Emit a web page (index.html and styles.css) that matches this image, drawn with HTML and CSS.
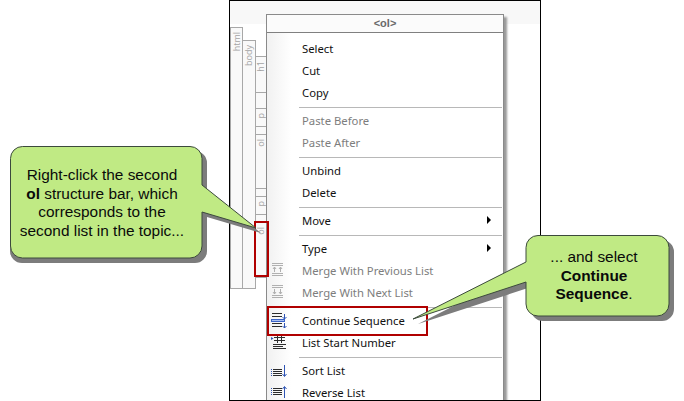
FILE: index.html
```html
<!DOCTYPE html>
<html lang="en">
<head>
<meta charset="utf-8">
<title>Continue Sequence</title>
<link rel="stylesheet" href="styles.css">
</head>
<body>
<div class="canvas">
  <div class="frame">
    <div class="strip"></div>
    <div class="bar bar-html"><span class="bar-label">html</span></div>
    <div class="bar bar-body"><span class="bar-label">body</span></div>
    <div class="bar cell1"><span class="bar-label">h1</span></div>
    <div class="bar cell2"></div>
    <div class="bar cell3"><span class="bar-label">p</span></div>
    <div class="bar cell4"></div>
    <div class="bar cell5"><span class="bar-label">ol</span></div>
    <div class="bar cell6"></div>
    <div class="bar cell7"><span class="bar-label">p</span></div>
    <div class="bar cell8"></div>
    <div class="bar cell9"><span class="bar-label">ol</span></div>
    <div class="menu">
      <div class="menu-title">&lt;ol&gt;</div>
      <div class="menu-body">
        <div class="item">Select</div>
        <div class="item">Cut</div>
        <div class="item">Copy</div>
        <div class="sep"></div>
        <div class="item off">Paste Before</div>
        <div class="item off">Paste After</div>
        <div class="sep"></div>
        <div class="item">Unbind</div>
        <div class="item">Delete</div>
        <div class="sep"></div>
        <div class="item sub">Move</div>
        <div class="sep"></div>
        <div class="item sub">Type</div>
        <div class="item off">
          <svg class="ico" width="16" height="16" viewBox="0 0 16 16"><path d="M1 1.500h11M1 3.500h11M1 11.500h11M1 13.500h11M3.500 5v5M9.500 5v5M2 7l1.500-2 1.500 2M8 7l1.500-2 1.500 2" stroke="#b0b0b0" fill="none"/></svg>
          Merge With Previous List</div>
        <div class="item off">
          <svg class="ico" width="16" height="16" viewBox="0 0 16 16"><path d="M1 1.500h11M1 3.500h11M1 11.500h11M1 13.500h11M3.500 5v5M9.500 5v5M2 8l1.500 2 1.500-2M8 8l1.500 2 1.500-2" stroke="#b0b0b0" fill="none"/></svg>
          Merge With Next List</div>
        <div class="sep"></div>
        <div class="item">
          <svg class="ico" width="16" height="16" viewBox="0 0 16 16"><path d="M1 1.500h10M1 4.500h10M1 11.500h10M1 14.500h10" stroke="#2b2b2b" fill="none"/><rect x="0.500" y="7.500" width="13" height="2" fill="#a9c0f0" stroke="#3c64c8"/><path d="M13.500 2v5M13.500 11v5M11.500 5l2 2 2-2M11.500 14l2 2 2-2" stroke="#2f55b5" fill="none"/></svg>
          Continue Sequence</div>
        <div class="item">
          <svg class="ico" width="16" height="16" viewBox="0 0 16 16"><path d="M0 3l2.500 1.500-2.500 1.500z" fill="#2f55b5"/><path d="M3 3.500h11M3 6.500h11M6.500 1v8M10.500 1v8M2 10.500h13M2 12.500h10M2 14.500h13" stroke="#2e2e2e" fill="none"/></svg>
          List Start Number</div>
        <div class="sep"></div>
        <div class="item">
          <svg class="ico" width="16" height="16" viewBox="0 0 16 16"><path d="M2 7.500h9M2 9.500h9M2 11.500h9M2 13.500h9" stroke="#2b2b2b" fill="none"/><path d="M0 7.500h1M0 9.500h1M0 11.500h1M0 13.500h1M13.500 3v11M11.500 12l2 2.500 2-2.500" stroke="#2f55b5" fill="none"/></svg>
          Sort List</div>
        <div class="item">
          <svg class="ico" width="16" height="16" viewBox="0 0 16 16"><path d="M2 4.500h9M2 6.500h9M2 8.500h9M2 10.500h9" stroke="#2b2b2b" fill="none"/><path d="M0 4.500h1M0 6.500h1M0 8.500h1M0 10.500h1M13.500 3v11M11.500 5l2-2.500 2 2.500" stroke="#2f55b5" fill="none"/></svg>
          Reverse List</div>
      </div>
    </div>
    <div class="mark mark-bar"></div>
    <div class="mark mark-item"></div>
  </div>
  <svg class="callouts" width="684" height="401" viewBox="0 0 684 401">
    <path class="shadow" d="M22 151H195a12 12 0 0 1 12 12V190L261 233 207 217V251a12 12 0 0 1-12 12H22a12 12 0 0 1-12-12V163a12 12 0 0 1 12-12z"/>
    <path class="shape" d="M22.500 146.500H190a12 12 0 0 1 12 12V185L256 228 202 212V246a12 12 0 0 1-12 12H22.500a12 12 0 0 1-12-12V158.500a12 12 0 0 1 12-12z"/>
    <path class="shadow" d="M543 240H662a12 12 0 0 1 12 12V309a12 12 0 0 1-12 12H543a12 12 0 0 1-12-12V287L418 324 531 267V252a12 12 0 0 1 12-12z"/>
    <path class="shape" d="M538 235.500H657a12 12 0 0 1 12 12V304a12 12 0 0 1-12 12H538a12 12 0 0 1-12-12V282L413 319 526 262V247.500a12 12 0 0 1 12-12z"/>
  </svg>
  <div class="note note-left">Right-click the second<br><b>ol</b> structure bar, which<br>corresponds to the<br>second list in the topic...</div>
  <div class="note note-right">... and select<br><b>Continue<br>Sequence</b>.</div>
</div>
</body>
</html>
```
FILE: styles.css
```css
html, body { margin: 0; padding: 0; background: #fff; }
.canvas { position: relative; width: 684px; height: 401px; overflow: hidden; }
.frame { position: absolute; left: 229px; top: 0; width: 310px; height: 399px; border: 1px solid #000; overflow: hidden; background: #fff; }
.strip { position: absolute; left: 0; top: 0; width: 310px; height: 23px; background: #f8f8f8; }
.bar { position: absolute; background: #f9f9f9; border: 1px solid #a8a8a8; box-sizing: border-box; }
.bar-label { position: absolute; top: 4px; left: 50%; font: 9px/12px "Open Sans", sans-serif; color: #a4a4a4; transform-origin: left top; transform: rotate(-90deg) translate(-100%, -50%); white-space: nowrap; }
.bar-html { left: 0; top: 26px; width: 13px; height: 262px; }
.bar-body { left: 12px; top: 39px; width: 14px; height: 249px; }
.cell1, .cell2, .cell3, .cell4, .cell5, .cell6, .cell7, .cell8, .cell9 { left: 25px; width: 12px; }
.cell1 { top: 55px; height: 37px; }
.cell2 { top: 91px; height: 17px; }
.cell3 { top: 107px; height: 19px; }
.cell4 { top: 125px; height: 9px; }
.cell5 { top: 133px; height: 55px; }
.cell6 { top: 187px; height: 9px; }
.cell7 { top: 195px; height: 19px; }
.cell8 { top: 213px; height: 9px; }
.cell9 { top: 221px; height: 56px; }
.menu { position: absolute; left: 36px; top: 13px; width: 236px; display: flex; flex-direction: column; border: 1px solid #8a8a8a; border-bottom: 0; background: #fff; box-shadow: 3px 3px 2px #9a9a9a; }
.menu-title { height: 17px; text-align: center; border-bottom: 1px solid #808080; font: bold 11px/17px "Liberation Sans", sans-serif; color: #6a6a6a; background: #fbfbfb; }
.menu-body { padding-top: 4px; background: linear-gradient(90deg, #f1f1f1 0, #fff 24px); }
.item { position: relative; height: 22px; padding-left: 35px; font: 11.300px/24px "Noto Sans", sans-serif; color: #111; white-space: nowrap; }
.off { color: #7d7d7d; }
.sub::after { content: ""; position: absolute; left: 220px; top: 7px; border-left: 4px solid #000; border-top: 4px solid transparent; border-bottom: 4px solid transparent; }
.sep { height: 6px; box-sizing: border-box; margin-left: 32px; margin-right: 1px; }
.sep::before { content: ""; display: block; height: 4px; border-bottom: 1px solid #b8b8b8; }
.ico { position: absolute; left: 4px; top: 3px; }
.mark { position: absolute; border: 2px solid #b00000; box-sizing: border-box; }
.mark-bar { left: 24px; top: 220px; width: 15px; height: 56px; }
.mark-item { left: 37px; top: 305px; width: 161px; height: 30px; }
.callouts { position: absolute; left: 0; top: 0; }
.shadow { fill: #7c7c7c; }
.shape { fill: #c0ea84; stroke: #3c4a3c; stroke-width: 1; }
.note { position: absolute; font: 15.400px/18.500px "Liberation Sans", sans-serif; color: #0a0a0a; text-align: center; white-space: nowrap; }
.note-left { left: 14px; top: 166px; width: 176px; }
.note-right { left: 532px; top: 248px; width: 124px; }
```
